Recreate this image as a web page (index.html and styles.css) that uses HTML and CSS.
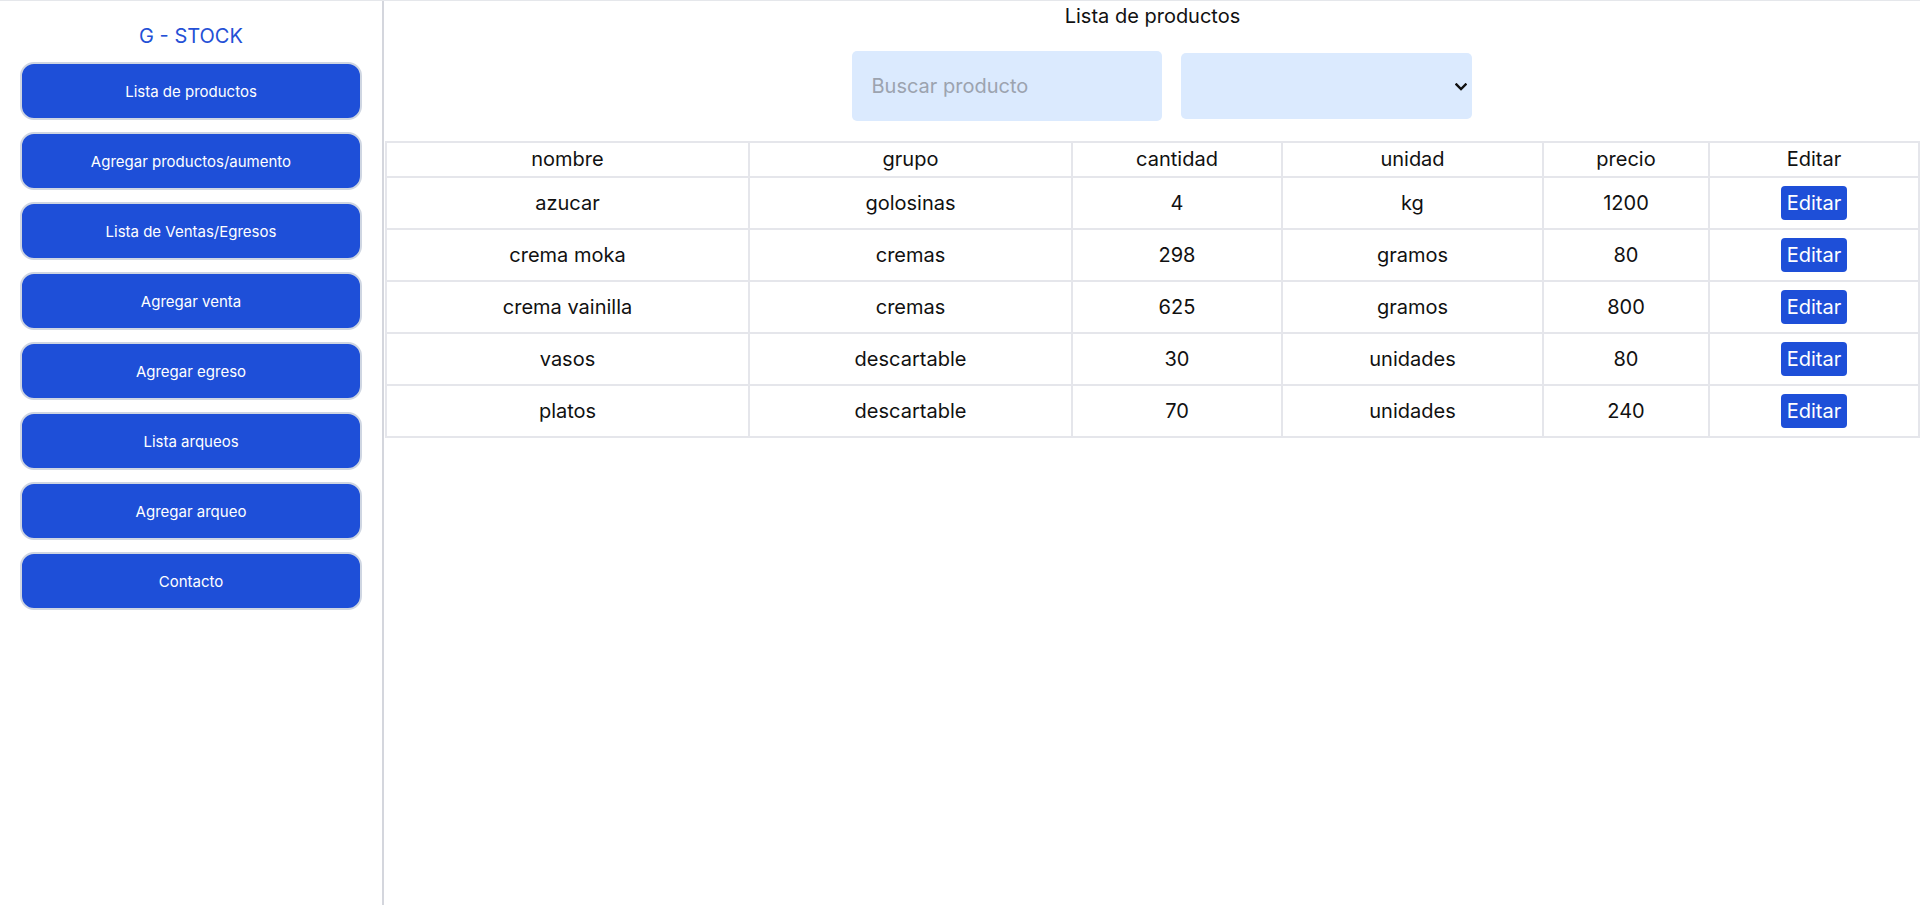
FILE: index.html
```html
<!DOCTYPE html>
<html lang="es">
<head>
<meta charset="utf-8">
<title>G - STOCK</title>
<link rel="stylesheet" href="styles.css">
</head>
<body>
<div class="app">
  <aside class="sidebar">
    <h1 class="brand">G - STOCK</h1>
    <nav class="menu">
      <button class="menu-btn">Lista de productos</button>
      <button class="menu-btn">Agregar productos/aumento</button>
      <button class="menu-btn">Lista de Ventas/Egresos</button>
      <button class="menu-btn">Agregar venta</button>
      <button class="menu-btn">Agregar egreso</button>
      <button class="menu-btn">Lista arqueos</button>
      <button class="menu-btn">Agregar arqueo</button>
      <button class="menu-btn">Contacto</button>
    </nav>
  </aside>
  <main class="content">
    <h2 class="page-title">Lista de productos</h2>
    <div class="filters">
      <input class="search" type="text" placeholder="Buscar producto">
      <span class="select-wrap">
        <select class="group-select"><option></option></select>
        <svg class="select-arrow" width="12" height="8" viewBox="0 0 12 8" aria-hidden="true">
          <path d="M1.4 1.4 L6 6 L10.6 1.4" fill="none" stroke="#111" stroke-width="2.3" stroke-linecap="square"/>
        </svg>
      </span>
    </div>
    <table class="products">
      <thead>
        <tr>
          <th class="c-nombre">nombre</th>
          <th class="c-grupo">grupo</th>
          <th class="c-cantidad">cantidad</th>
          <th class="c-unidad">unidad</th>
          <th class="c-precio">precio</th>
          <th class="c-editar">Editar</th>
        </tr>
      </thead>
      <tbody>
        <tr><td>azucar</td><td>golosinas</td><td>4</td><td>kg</td><td>1200</td><td><button class="edit-btn">Editar</button></td></tr>
        <tr><td>crema moka</td><td>cremas</td><td>298</td><td>gramos</td><td>80</td><td><button class="edit-btn">Editar</button></td></tr>
        <tr><td>crema vainilla</td><td>cremas</td><td>625</td><td>gramos</td><td>800</td><td><button class="edit-btn">Editar</button></td></tr>
        <tr><td>vasos</td><td>descartable</td><td>30</td><td>unidades</td><td>80</td><td><button class="edit-btn">Editar</button></td></tr>
        <tr><td>platos</td><td>descartable</td><td>70</td><td>unidades</td><td>240</td><td><button class="edit-btn">Editar</button></td></tr>
      </tbody>
    </table>
  </main>
</div>
</body>
</html>
```

FILE: styles.css
```css
* { box-sizing: border-box; }

html, body {
  margin: 0;
  padding: 0;
  height: 100%;
}

body {
  font-family: Inter, "Noto Sans", sans-serif;
  color: #111111;
  background: #ffffff;
}

.app {
  display: flex;
  min-height: 100vh;
  border-top: 1px solid #e5e7eb;
}

.sidebar {
  width: 384px;
  flex: 0 0 384px;
  border-right: 2px solid #d4d6dd;
  padding: 23px 20px 0 20px;
}

.brand {
  margin: 0 0 14px 0;
  font-size: 20px;
  line-height: 24px;
  font-weight: 400;
  color: #2450d6;
  text-align: center;
}

.menu {
  display: flex;
  flex-direction: column;
  gap: 12px;
}

.menu-btn {
  width: 342px;
  height: 58px;
  border: 2px solid #cfd6e2;
  border-radius: 14px;
  background: #1e4fd8;
  color: #ffffff;
  font-family: Inter, "Noto Sans", sans-serif;
  font-size: 15px;
  cursor: pointer;
}

.content {
  flex: 1;
  padding: 2px 0 0 1px;
}

.page-title {
  margin: 0;
  font-size: 20px;
  line-height: 26px;
  font-weight: 400;
  text-align: center;
}

.filters {
  display: flex;
  justify-content: center;
  align-items: center;
  gap: 19px;
  margin-top: 22px;
  padding-left: 18px;
}

.search {
  width: 310px;
  height: 70px;
  border: none;
  border-radius: 5px;
  background: #dbeafe;
  padding: 0 20px;
  font-family: Inter, "Noto Sans", sans-serif;
  font-size: 20px;
  color: #111;
  outline: none;
}

.search::placeholder { color: #9ca3af; }

.select-wrap {
  position: relative;
  display: block;
  width: 291px;
  height: 66px;
}

.group-select {
  appearance: none;
  -webkit-appearance: none;
  width: 100%;
  height: 100%;
  border: none;
  border-radius: 5px;
  background-color: #dbeafe;
  font-family: Inter, "Noto Sans", sans-serif;
  font-size: 20px;
  color: #111;
  padding: 0 24px 0 12px;
}

.select-arrow {
  position: absolute;
  right: 5px;
  top: 30px;
  pointer-events: none;
}

.products {
  margin-top: 20px;
  width: 1533px;
  border-collapse: collapse;
  table-layout: fixed;
  font-size: 20px;
  line-height: 24px;
}

.products th,
.products td {
  border: 2px solid #e5e6eb;
  text-align: center;
  font-weight: 400;
}

.products th { padding: 4px 0 5px 0; }
.products td { padding: 8px 0; }

.c-nombre { width: 363px; }
.c-grupo { width: 323px; }
.c-cantidad { width: 210px; }
.c-unidad { width: 261px; }
.c-precio { width: 166px; }
.c-editar { width: 210px; }

.edit-btn {
  height: 34px;
  padding: 0 6px;
  border: none;
  border-radius: 4px;
  background: #1e4fd8;
  color: #ffffff;
  font-family: Inter, "Noto Sans", sans-serif;
  font-size: 20px;
  line-height: 24px;
  cursor: pointer;
  vertical-align: middle;
}
```
